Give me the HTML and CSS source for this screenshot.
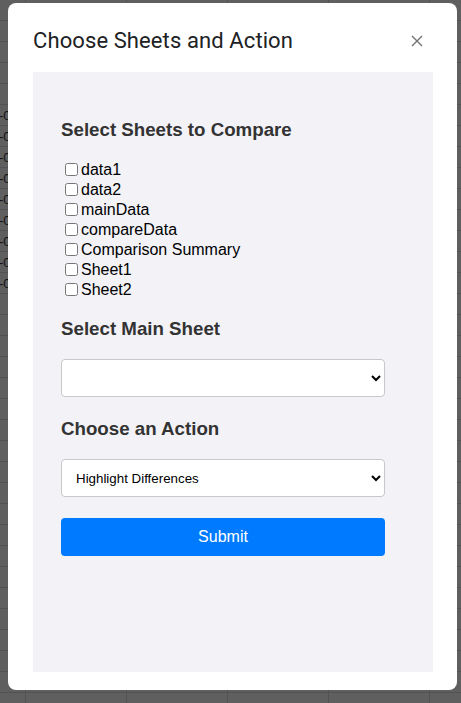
FILE: index.html
```html
<!DOCTYPE html>
<html>
<head>
<meta charset="utf-8">
<title>Choose Sheets and Action</title>
<link rel="stylesheet" href="styles.css">
</head>
<body>
<div class="stage">
  <div class="edge-left">
    <div class="cell"></div>
    <div class="cell"></div>
    <div class="cell"></div>
    <div class="cell"></div>
    <div class="cell"></div>
    <div class="cell">-0</div>
    <div class="cell">-0</div>
    <div class="cell">-0</div>
    <div class="cell">-0</div>
    <div class="cell">-0</div>
    <div class="cell">-0</div>
    <div class="cell">-0</div>
    <div class="cell">-0</div>
    <div class="cell">-0</div>
  </div>
  <div class="dialog">
    <div class="dialog-header">
      <div class="dialog-title">Choose Sheets and Action</div>
      <button class="close" aria-label="Close">
        <svg width="12" height="12" viewBox="0 0 12 12"><path d="M1 1 L11 11 M11 1 L1 11" stroke="#6f7175" stroke-width="1.4" fill="none"/></svg>
      </button>
    </div>
    <div class="frame">
      <h3 class="heading">Select Sheets to Compare</h3>
      <div class="sheet-list">
        <label class="row"><input type="checkbox">data1</label>
        <label class="row"><input type="checkbox">data2</label>
        <label class="row"><input type="checkbox">mainData</label>
        <label class="row"><input type="checkbox">compareData</label>
        <label class="row"><input type="checkbox">Comparison Summary</label>
        <label class="row"><input type="checkbox">Sheet1</label>
        <label class="row"><input type="checkbox">Sheet2</label>
      </div>
      <h3 class="heading">Select Main Sheet</h3>
      <select class="field"><option></option></select>
      <h3 class="heading">Choose an Action</h3>
      <select class="field"><option>Highlight Differences</option></select>
      <button class="submit">Submit</button>
    </div>
  </div>
  <div class="edge-right"></div>
</div>
</body>
</html>
```
FILE: styles.css
```css
html, body {
  margin: 0;
  padding: 0;
}
body {
  width: 461px;
  height: 703px;
  overflow: hidden;
  background-color: #5f5f5f;
  background-image:
    repeating-linear-gradient(to bottom, transparent 0, transparent 20px, #525252 20px, #525252 21px),
    repeating-linear-gradient(to right, transparent 0, transparent 25px, #525252 25px, #525252 26px, transparent 26px, transparent 101px);
  background-size: 461px 703px, 461px 703px;
  font-family: "Liberation Sans", Arial, sans-serif;
}
.stage {
  display: flex;
  align-items: flex-start;
  height: 703px;
}
.edge-left {
  width: 8px;
  flex: none;
  overflow: hidden;
  display: flex;
  flex-direction: column;
}
.cell {
  height: 21px;
  line-height: 21px;
  font-size: 13px;
  color: #111;
  text-indent: -1px;
  white-space: nowrap;
  flex: none;
}
.dialog {
  width: 449px;
  height: 687px;
  margin-top: 3px;
  background: #fff;
  border-radius: 8px;
  box-sizing: border-box;
  padding: 0 24px 18px 25px;
  display: flex;
  flex-direction: column;
  flex: none;
}
.dialog-header {
  height: 69px;
  display: flex;
  align-items: flex-start;
  justify-content: space-between;
}
.dialog-title {
  font-family: Roboto, "Noto Sans", sans-serif;
  font-size: 22px;
  line-height: 28px;
  margin-top: 24px;
  color: #202124;
  letter-spacing: 0.1px;
}
.close {
  margin-top: 31px;
  margin-right: 9px;
  width: 14px;
  height: 14px;
  padding: 1px;
  border: 0;
  background: transparent;
  display: flex;
  align-items: center;
  justify-content: center;
}
.frame {
  background: #f2f2f7;
  width: 400px;
  height: 600px;
  box-sizing: border-box;
  padding: 47px 48px 0 28px;
  display: flex;
  flex-direction: column;
  align-items: stretch;
  color: #333;
}
.heading {
  font-size: 18.72px;
  font-weight: bold;
  line-height: 22px;
  margin: 0 0 19px;
  color: #333;
}
.sheet-list {
  display: flex;
  flex-direction: column;
  margin-bottom: 18px;
}
.row {
  height: 20px;
  line-height: 20px;
  font-size: 16px;
  color: #000;
  display: flex;
  align-items: flex-start;
}
.row input {
  width: 13px;
  height: 13px;
  margin: 3px 3px 0 4px;
  flex: none;
}
.field {
  height: 38px;
  margin: 0 0 21px;
  padding: 0 8px 0 10px;
  border: 1px solid #c8c8c8;
  border-radius: 4px;
  background: #fff;
  font-family: "Liberation Sans", Arial, sans-serif;
  font-size: 13.33px;
  color: #000;
}
.submit {
  height: 38px;
  border: 0;
  border-radius: 4px;
  background: #007bff;
  color: #fff;
  font-family: "Liberation Sans", Arial, sans-serif;
  font-size: 16px;
  padding: 0;
}
```
